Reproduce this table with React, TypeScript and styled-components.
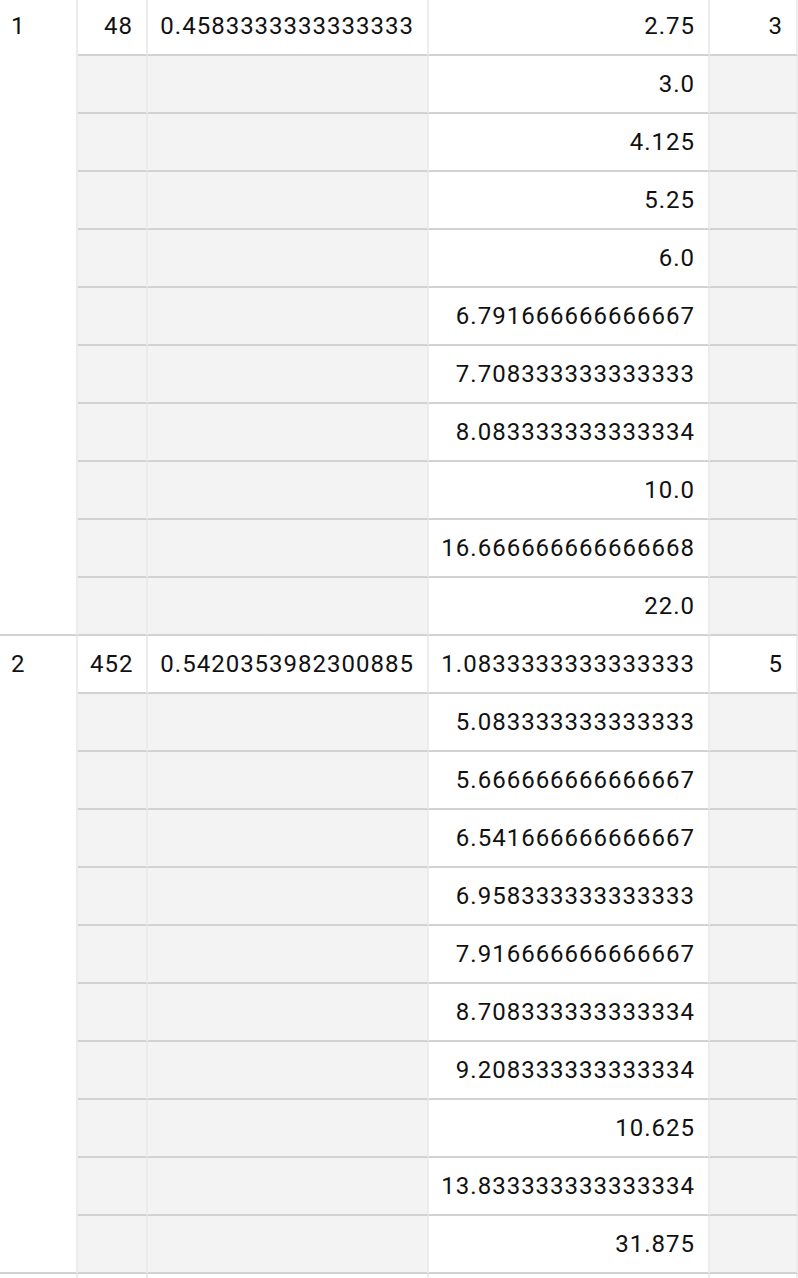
import React from 'react';
import styled, { createGlobalStyle } from 'styled-components';

const GlobalStyle = createGlobalStyle`
  html, body {
    margin: 0;
    padding: 0;
    background: #ffffff;
  }
`;

const Viewport = styled.div`
  width: 100vw;
  height: 100vh;
  overflow: hidden;
`;

const Table = styled.table`
  margin-top: -2px;
  border-collapse: separate;
  border-spacing: 0;
  table-layout: fixed;
  width: 1000px;
  font-family: Roboto, "Liberation Sans", sans-serif;
  font-size: 24px;
  letter-spacing: 1px;
  color: #111111;
`;

const Col = styled.col<{ $width: number }>`
  width: ${({ $width }) => $width}px;
`;

const Cell = styled.td<{ $align?: 'left' | 'right'; $shaded?: boolean }>`
  box-sizing: border-box;
  height: 58px;
  padding: 0 13px 0 12px;
  border-right: 2px solid #ececec;
  border-bottom: 2px solid #d2d2d2;
  text-align: ${({ $align }) => $align || 'right'};
  vertical-align: middle;
  white-space: nowrap;
  overflow: hidden;
  background: ${({ $shaded }) => ($shaded ? '#f3f3f3' : '#ffffff')};
`;

const IndexCell = styled(Cell)`
  vertical-align: top;
  padding: 16px 10px 0 11px;
  line-height: 24px;
`;

type Group = {
  index: number;
  count: number;
  ratio: string;
  values: string[];
  last: number;
};

const columnWidths = [78, 70, 281, 281, 88, 202];

const groups: Group[] = [
  {
    index: 1,
    count: 48,
    ratio: '0.4583333333333333',
    values: ['2.75', '3.0', '4.125', '5.25', '6.0', '6.791666666666667', '7.708333333333333', '8.083333333333334', '10.0', '16.666666666666668', '22.0'],
    last: 3,
  },
  {
    index: 2,
    count: 452,
    ratio: '0.5420353982300885',
    values: ['1.0833333333333333', '5.083333333333333', '5.666666666666667', '6.541666666666667', '6.958333333333333', '7.916666666666667', '8.708333333333334', '9.208333333333334', '10.625', '13.833333333333334', '31.875'],
    last: 5,
  },
  {
    index: 3,
    count: 0,
    ratio: '',
    values: [''],
    last: 0,
  },
];

const GroupRows: React.FC<{ group: Group }> = ({ group }) => (
  <>
    {group.values.map((v, i) => (
      <tr key={i}>
        {i === 0 && (
          <IndexCell $align="left" rowSpan={group.values.length}>
            {group.ratio ? group.index : ''}
          </IndexCell>
        )}
        <Cell $shaded={i > 0}>{i === 0 && group.ratio ? group.count : ''}</Cell>
        <Cell $shaded={i > 0}>{i === 0 ? group.ratio : ''}</Cell>
        <Cell>{v}</Cell>
        <Cell $shaded={i > 0}>{i === 0 && group.ratio ? group.last : ''}</Cell>
        <Cell $shaded={i > 0} />
      </tr>
    ))}
  </>
);

export default function App() {
  return (
    <Viewport>
      <GlobalStyle />
      <Table>
        <colgroup>
          {columnWidths.map((w, i) => (
            <Col key={i} $width={w} />
          ))}
        </colgroup>
        <tbody>
          {groups.map((g) => (
            <GroupRows key={g.index} group={g} />
          ))}
        </tbody>
      </Table>
    </Viewport>
  );
}
